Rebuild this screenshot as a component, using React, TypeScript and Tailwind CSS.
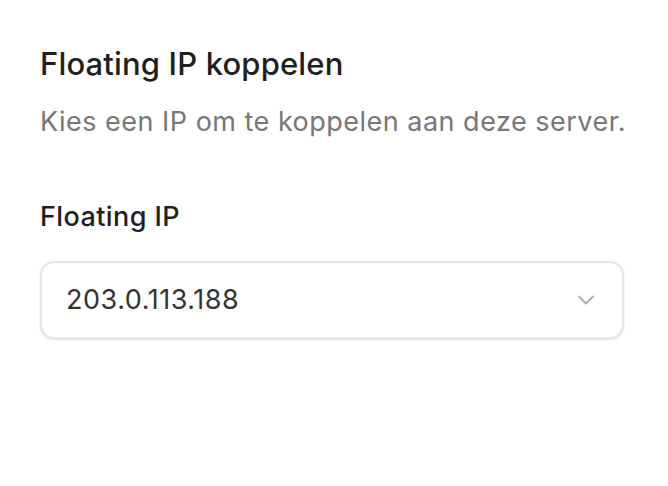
import { ChevronDown } from 'lucide-react';

const App = () => {
  return (
    <div className="min-h-screen bg-white px-10 pt-[44px] font-['Inter',sans-serif]">
      <h2 className="text-[31px] leading-10 font-medium text-[#1f1f1f] tracking-[0.005em]">
        Floating IP koppelen
      </h2>
      <p className="mt-[22px] text-[27px] leading-8 text-[#777777] tracking-[0.018em]">
        Kies een IP om te koppelen aan deze server.
      </p>

      <div className="mt-[61px] w-[584px]">
        <label className="block text-[27px] leading-9 font-medium text-[#1f1f1f] tracking-[0.015em]">
          Floating IP
        </label>
        <div className="mt-[26px] flex h-[78px] items-center justify-between rounded-[14px] border-2 border-[#e6e6e6] bg-white pl-[24px] pr-[22px] shadow-sm">
          <span className="text-[27px] text-[#333333] tracking-[0.02em]">203.0.113.188</span>
          <ChevronDown className="h-7 w-7 text-[#aaaaaa]" strokeWidth={1.6} />
        </div>
      </div>
    </div>
  );
};

export default App;
